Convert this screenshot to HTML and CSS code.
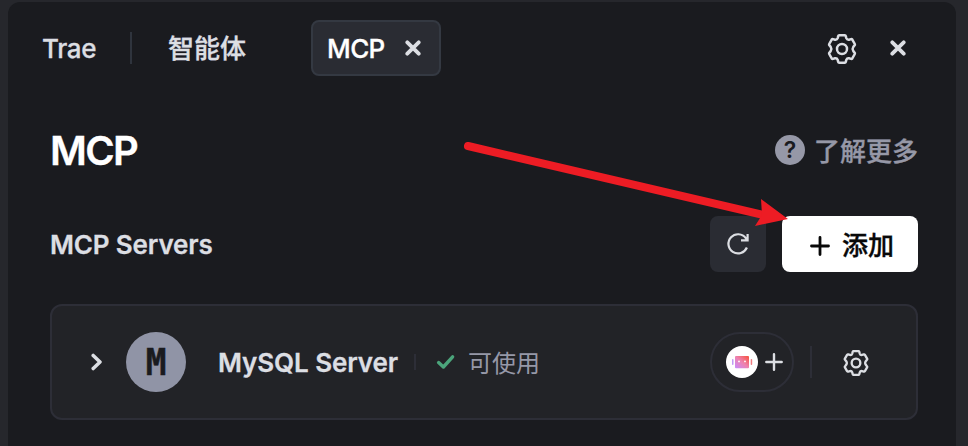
FILE: index.html
```html
<!DOCTYPE html>
<html lang="zh-CN">
<head>
<meta charset="utf-8">
<title>MCP</title>
<link rel="stylesheet" href="styles.css">
</head>
<body>
<svg width="0" height="0" class="defs">
  <symbol id="gear" viewBox="-15 -15 30 30">
    <path d="M-2.8-13.7H2.8Q3.6-13.7 3.8-12.9L4.3-10.9Q5-9 7-9.3L9-9.9Q9.8-10.1 10.3-9.4L12.8-5Q13.2-4.3 12.6-3.7L11.3-2.1Q9.9 0 11.3 2.1L12.6 3.7Q13.2 4.3 12.8 5L10.3 9.4Q9.8 10.1 9 9.9L7 9.3Q5 9 4.3 10.9L3.8 12.9Q3.6 13.7 2.8 13.7H-2.8Q-3.6 13.7-3.8 12.9L-4.3 10.9Q-5 9-7 9.3L-9 9.9Q-9.8 10.1-10.3 9.4L-12.8 5Q-13.2 4.3-12.6 3.7L-11.3 2.1Q-9.9 0-11.3-2.1L-12.6-3.7Q-13.2-4.3-12.8-5L-10.3-9.4Q-9.8-10.1-9-9.9L-7-9.3Q-5-9-4.3-10.9L-3.8-12.9Q-3.6-13.7-2.8-13.7Z"/>
    <circle r="5"/>
  </symbol>
  <symbol id="close" viewBox="0 0 16 16"><path d="M2.3 2.3L13.7 13.7M13.7 2.3L2.3 13.7"/></symbol>
</svg>
<main class="panel">
  <header class="tabs">
    <span class="tab">Trae</span>
    <i class="tab-divider"></i>
    <span class="tab-agent cjk">智能体</span>
    <div class="tab-active"><span>MCP</span><svg class="close"><use href="#close"/></svg></div>
    <svg class="gear"><use href="#gear"/></svg>
    <svg class="close close-panel"><use href="#close"/></svg>
  </header>
  <section class="title-row">
    <h1>MCP</h1>
    <div class="learn"><span class="question">?</span><span class="cjk">了解更多</span></div>
  </section>
  <section class="servers-row">
    <h2>MCP Servers</h2>
    <button class="refresh"><svg viewBox="0 0 24 24"><path d="M20.9 15.5A9.6 9.6 0 1 1 19.8 6.2L21.3 8.3M21.6 2V8.4H15"/></svg></button>
    <button class="add"><svg viewBox="0 0 20 20"><path d="M10 1.5V18.5M1.5 10H18.5"/></svg><span class="cjk">添加</span></button>
  </section>
  <section class="card">
    <svg class="chevron" viewBox="0 0 12 18"><path d="M2.2 2.4L9 9L2.2 15.6"/></svg>
    <span class="avatar"><span class="letter">M</span></span>
    <span class="name">MySQL Server</span>
    <i class="status-divider"></i>
    <svg class="check" viewBox="0 0 20 16"><path d="M2.6 8.6L7.4 13L16.6 2.8"/></svg>
    <span class="status">可使用</span>
    <div class="agents">
      <svg class="bot" viewBox="0 0 32 32">
        <defs><linearGradient id="face" x1="0" y1="1" x2="1" y2="0"><stop offset="0" stop-color="#c58bff"/><stop offset=".5" stop-color="#ee82b0"/><stop offset="1" stop-color="#f7513b"/></linearGradient></defs>
        <circle cx="16" cy="16" r="16" fill="#fff"/>
        <rect x="9" y="10" width="14" height="12.3" rx="1" fill="url(#face)"/>
        <rect x="6" y="13" width="1.5" height="6" rx=".7" fill="#c09af5"/>
        <rect x="24.7" y="13" width="1.5" height="6" rx=".7" fill="#ef7c80"/>
        <circle cx="13" cy="15.4" r=".9" fill="#fff"/><circle cx="19" cy="15.4" r=".9" fill="#fff"/>
      </svg>
      <svg class="plus" viewBox="0 0 18 18"><path d="M9 1.3V16.7M1.3 9H16.7"/></svg>
    </div>
    <i class="card-divider"></i>
    <svg class="gear gear-small"><use href="#gear"/></svg>
  </section>
  <svg class="arrow" viewBox="0 0 340 100"><path class="shaft" d="M17 18L314 87.3"/><path d="M310 71L337 91L304 98L311 87Z"/></svg>
</main>
</body>
</html>
```
FILE: styles.css
```css
* { box-sizing: border-box; }
body {
  margin: 0;
  height: 446px;
  padding: 2px 12px 0 8px;
  overflow: hidden;
  background: #26272c;
  color: #dcdee3;
  font-family: Inter, "Noto Sans CJK SC", sans-serif;
}
svg { display: block; flex: none; fill: none; stroke: currentColor; stroke-linecap: round; stroke-linejoin: round; }
i { flex: none; }
.defs { position: absolute; }
.panel { position: relative; height: 444px; border-radius: 12px 12px 0 0; background: #1a1b1f; }
.tabs { display: flex; align-items: center; height: 92px; padding: 0 50px 0 34px; font-size: 26px; font-weight: 500; white-space: nowrap; }
.tab { width: 55px; letter-spacing: -0.3px; }
.tab, .tab-active span, h1, h2, .name { -webkit-text-stroke: 0.3px currentColor; }
.tab-divider { width: 2px; height: 32px; margin: 0 36px 0 33px; background: #2f343d; }
.cjk { padding-bottom: 2px; -webkit-text-stroke: 0.35px currentColor; }
.tab-agent { width: 78px; padding-bottom: 3px; }
.tab-active { display: flex; align-items: center; justify-content: space-between; width: 130px; height: 56px; margin-left: 65px; padding: 0 18px 0 14px; border: 2px solid #343942; border-radius: 8px; background: #2a2c33; color: #fff; letter-spacing: -0.6px; }
.close { width: 16px; height: 16px; stroke-width: 3.8; color: #dcdee3; }
.gear { width: 30px; height: 30px; margin-top: 1px; margin-left: auto; stroke-width: 2.5; }
.close-panel { margin-left: 33px; }
.title-row { display: flex; align-items: center; justify-content: space-between; height: 114px; padding: 0 38px 0 42px; }
h1, h2 { margin: 0; font-weight: 600; }
h1 { padding-bottom: 1px; color: #fff; font-size: 40px; letter-spacing: -1.7px; }
.learn { display: flex; align-items: center; gap: 9px; padding-bottom: 2px; color: #9698a7; font-size: 26px; font-weight: 500; }
.question { display: flex; align-items: center; justify-content: center; width: 30px; height: 30px; border-radius: 50%; background: #9698a7; color: #1a1b1f; font-size: 23px; font-weight: 600; }
.servers-row { display: flex; align-items: center; height: 72px; padding: 0 38px 0 42px; }
h2 { font-size: 26px; letter-spacing: -0.15px; }
button { display: flex; align-items: center; justify-content: center; height: 56px; padding: 0; border: 0; border-radius: 8px; font: inherit; }
.refresh { width: 56px; margin-left: auto; background: #2a2c33; color: #dcdee3; }
.refresh svg { width: 24px; height: 24px; stroke-width: 2.2; stroke-linecap: butt; stroke-linejoin: miter; }
.add { width: 136px; margin-left: 16px; padding-left: 4px; gap: 12px; background: #fff; color: #080808; font-size: 26px; font-weight: 500; }
.add svg { width: 20px; height: 20px; margin-top: 3px; stroke-width: 2.8; }
.card { display: flex; align-items: center; height: 116px; margin: 24px 38px 0 42px; padding: 0 47px 0 39px; border: 2px solid #2d2e37; border-radius: 12px; background: #222327; }
.chevron { width: 12px; height: 18px; stroke-width: 3.5; }
.avatar { display: flex; align-items: center; justify-content: center; width: 60px; height: 60px; margin-left: 23px; border-radius: 50%; background: #9094a6; color: #1a1b1f; font: bold 37px "DejaVu Sans Mono", monospace; }
.letter { transform: scaleX(.93); -webkit-text-stroke: 0.5px currentColor; }
.name { width: 181px; margin-left: 32px; font-size: 26px; font-weight: 600; letter-spacing: -0.1px; white-space: nowrap; }
.status-divider { width: 2px; height: 16px; margin-left: 15px; background: #2d2e37; }
.check { width: 20px; height: 16px; margin-left: 20px; color: #4ba47b; stroke-width: 3.4; }
.status { margin-left: 12px; padding-bottom: 2px; color: #9698a7; font-size: 24px; }
.agents { display: flex; align-items: center; width: 84px; height: 60px; margin-left: auto; padding-left: 14px; border: 2px solid #2d2e37; border-radius: 30px; }
.bot { width: 32px; height: 32px; stroke: none; }
.plus { width: 18px; height: 18px; margin-left: 7px; stroke-width: 2.4; }
.card-divider { width: 2px; height: 32px; margin: 0 31px 0 16px; background: #2d2e37; }
.gear-small { width: 26px; height: 26px; margin-top: 1px; margin-left: 0; stroke-width: 2.7; }
.arrow { position: absolute; left: 443px; top: 126px; width: 340px; height: 100px; fill: #ed1c24; stroke: none; }
.shaft { stroke: #ed1c24; stroke-width: 8; }
```
